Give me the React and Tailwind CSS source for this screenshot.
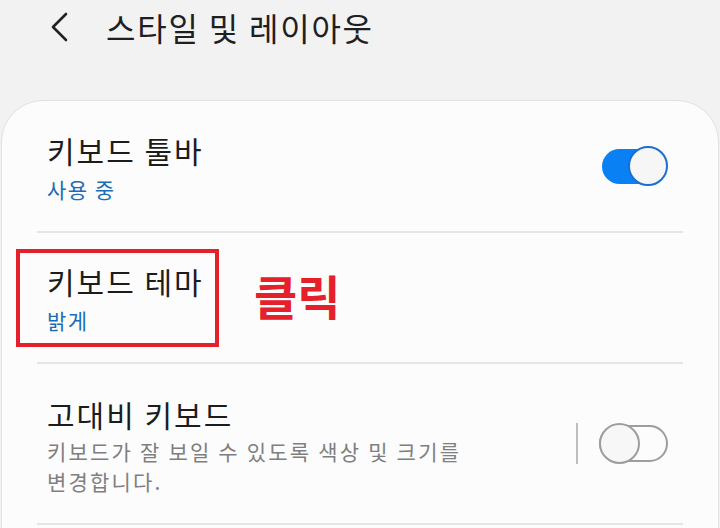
import React from 'react'

const font = { fontFamily: '"Noto Sans CJK KR", "Noto Sans", sans-serif' }

function ToggleOn() {
  return (
    <div className="relative w-[66px] h-[40px]">
      <div className="absolute left-0 top-[3px] w-[50px] h-[35px] rounded-l-full bg-[#0a80f5]" />
      <div className="absolute right-0 top-0 w-[40px] h-[40px] rounded-full border-2 border-[#1b6fd0] bg-[#f6f6f6]" />
    </div>
  )
}

function ToggleOff() {
  return (
    <div className="flex items-center">
      <div className="w-[2px] h-[41px] bg-[#bdbdbd] mr-[21px]" />
      <div className="relative w-[69px] h-[41px]">
        <div className="absolute left-0 top-[2px] w-[69px] h-[37px] rounded-full border-2 border-[#9d9d9d]" />
        <div className="absolute left-0 top-0 w-[41px] h-[41px] rounded-full border-2 border-[#9d9d9d] bg-[#f7f7f7]" />
      </div>
    </div>
  )
}

export default function App() {
  return (
    <div className="w-[720px] h-[528px] bg-[#f2f2f2] overflow-hidden" style={font}>
      {/* Header */}
      <div className="h-[100px] flex items-start pt-[4px]">
        <div className="flex items-center h-[46px]">
          <svg className="ml-[49px]" width="22" height="30" viewBox="0 0 22 30">
            <path d="M17 2 L4 15 L17 28" fill="none" stroke="#222" strokeWidth="2.6" strokeLinecap="round" strokeLinejoin="round" />
          </svg>
          <h1 className="ml-[35px] text-[32px] leading-[40px] text-[#1f1f1f] tracking-[1.8px]">스타일 및 레이아웃</h1>
        </div>
      </div>

      {/* Card */}
      <div className="mx-[1px] bg-[#fcfcfc] border border-[#e2e2e2] rounded-t-[42px] px-[35px] h-[440px]">
        {/* Row 1 */}
        <div className="h-[132px] border-b-2 border-[#e6e6e6] pl-[10px] pr-[15px] flex items-center justify-between">
          <div className="pt-[2px]">
            <div className="text-[30px] leading-[38px] tracking-[2px] text-[#1c1c1c]">키보드 툴바</div>
            <div className="text-[21px] leading-[30px] mt-[5px] tracking-[1.5px] text-[#1b6cb5]">사용 중</div>
          </div>
          <ToggleOn />
        </div>

        {/* Row 2 */}
        <div className="relative h-[131px] border-b-2 border-[#e6e6e6] pl-[10px] pr-[15px] flex items-center">
          <div className="pt-[2px]">
            <div className="text-[30px] leading-[38px] tracking-[2px] text-[#1c1c1c]">키보드 테마</div>
            <div className="text-[21px] leading-[30px] mt-[5px] tracking-[1.5px] text-[#1b6cb5]">밝게</div>
          </div>
          <div className="absolute left-[-21px] top-[16px] w-[203px] h-[98px] border-[4px] border-[#e3202b]" />
          <div className="absolute left-[217px] top-[30px] text-[47px] leading-[64px] font-bold text-[#e5202b]">클릭</div>
        </div>

        {/* Row 3 */}
        <div className="h-[161px] border-b-2 border-[#e6e6e6] pl-[10px] pr-[15px] flex items-center justify-between">
          <div className="pt-[4px]">
            <div className="text-[30px] leading-[38px] tracking-[2px] text-[#1c1c1c]">고대비 키보드</div>
            <div className="text-[21px] leading-[30px] mt-[3px] tracking-[2.2px] text-[#7f7f7f]">
              키보드가 잘 보일 수 있도록 색상 및 크기를<br />변경합니다.
            </div>
          </div>
          <ToggleOff />
        </div>
      </div>
    </div>
  )
}
